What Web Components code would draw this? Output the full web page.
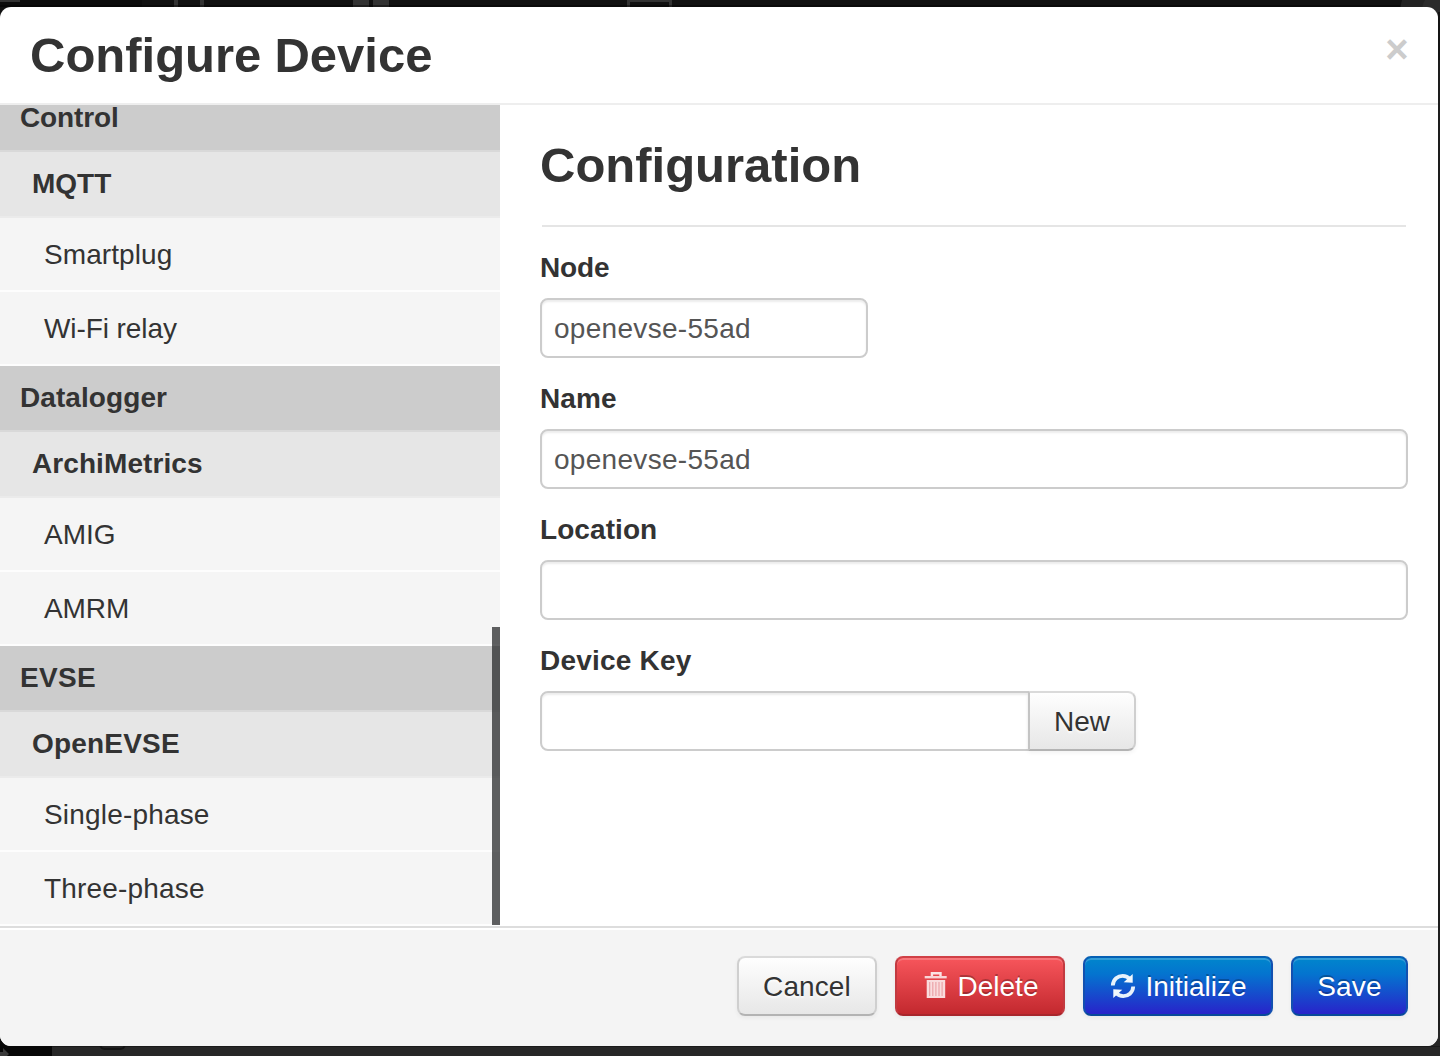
<!DOCTYPE html>
<html lang="en">
<head>
<meta charset="utf-8">
<title>Configure Device</title>
<style>
html, body { margin: 0; height: 100%; overflow: hidden; background: #111; }
body { font: 28px/40px "Liberation Sans", Arial, sans-serif; color: #333; }
</style>
</head>
<body>
<device-app></device-app>
<script>
const define = (name, html, init) => {
  const t = document.createElement('template');
  t.innerHTML = html;
  customElements.define(name, class extends HTMLElement {
    constructor() {
      super();
      this.attachShadow({ mode: 'open' }).append(t.content.cloneNode(true));
    }
    connectedCallback() {
      // optional per-label tracking, in px
      if (this.hasAttribute('track')) this.style.letterSpacing = this.getAttribute('track') + 'px';
      if (init) init(this, this.shadowRoot);
    }
  });
};

define('page-backdrop', `
<style>:host{display:block;position:absolute;inset:0;z-index:-1} svg{display:block}</style>
<svg width="1440" height="1056" viewBox="0 0 1440 1056">
  <rect width="1440" height="1056" fill="#111"/>
  <rect width="142" height="7" fill="#0c0c0c"/>
  <path fill="#333" d="M0 0h20v2H0zM174 0h4v7h-4zM200 0h4v7h-4zM353 0h16v7h-16zM373 0h16v7h-16z"/>
  <path fill="#333" d="M627 0h45v7h-3V2h-39v5h-3z"/>
  <rect y="5" width="1400" height="2" fill="#000" opacity=".4"/>
  <path fill="#222" d="M1402 0h38v60h-38q-4-48 0-60z"/>
  <path fill="#2b2b2b" d="M1425 0h15v16h-18q-1-10 3-16z"/>
  <rect x="1438" y="12" width="2" height="48" fill="#141414"/>
  <rect x="1438" y="60" width="2" height="996" fill="#1d1d1d"/>
  <rect y="1030" width="1440" height="26" fill="#272727"/>
  <rect y="1046" width="1440" height="1" fill="#1a1a1a"/>
  <rect y="1030" width="52" height="26" fill="#070707"/>
  <path d="M3 1048l6 6-2 2H0v-4h3z" fill="#3a3a3a"/>
  <rect x="100.500" y="1035" width="24" height="14" rx="4" fill="#222" stroke="#131313" stroke-width="2"/>
</svg>`);

define('modal-dialog', `
<style>
:host{display:flex;flex-direction:column;box-sizing:border-box;width:1438px;height:1039px;background:#fff;border-radius:11px;overflow:hidden}
header{display:flex;justify-content:space-between;align-items:flex-start;box-sizing:border-box;height:98px;padding:18px 30px 0;border-bottom:2px solid #eee;flex:none}
h3{margin:0;font-size:49px;line-height:60px;font-weight:bold;word-spacing:-.5px}
.close{font-size:40px;line-height:40px;font-weight:bold;color:#ccc;padding-top:4px;margin-right:-.5px}
main{display:flex;height:821px;flex:none}
footer{display:flex;justify-content:flex-end;gap:18px;box-sizing:border-box;flex:1;padding:28px 30px 30px;background:#f4f4f4;border-top:2px solid #ddd;box-shadow:inset 0 2px 0 #fff}
</style>
<header><h3><slot name="title"></slot></h3><span class="close">×</span></header>
<main><slot></slot></main>
<footer><slot name="actions"></slot></footer>`);

define('device-menu', `
<style>
:host{display:flex;position:relative;flex-direction:column;justify-content:flex-end;width:500px;height:821px;overflow:hidden;background:#fff;flex:none}
.thumb{position:absolute;right:0;top:522px;width:8px;height:298px;background:rgba(34,36,38,.72)}
</style>
<slot></slot><div class="thumb"></div>`);

define('menu-row', `
<style>
:host{display:block;box-sizing:border-box;flex:none;height:74px;line-height:74px;padding-left:44px;background:#f5f5f5;border-bottom:2px solid #fdfdfd}
:host([level="1"]){height:66px;line-height:64px;padding-left:20px;background:#ccc;border-color:#d9d9d9;font-weight:bold}
:host([level="2"]){height:66px;line-height:64px;padding-left:32px;background:#e6e6e6;border-color:#ebebeb;font-weight:bold}
:host([partial]){height:47px!important;line-height:26px!important}
</style>
<slot></slot>`);

define('config-form', `
<style>
:host{display:flex;flex-direction:column;flex:1;padding:30px 30px 0 40px}
h3{margin:0;font-size:49px;line-height:60px;font-weight:bold}
hr{margin:30px 2px 20px;border:0;height:2px;background:#e5e5e5}
</style>
<h3><slot name="title"></slot></h3><hr><slot></slot>`);

define('form-field', `
<style>
:host{display:block;height:131px}
label{display:block;height:40px;line-height:42px;font-weight:bold;margin-bottom:11px}
.row{display:flex;letter-spacing:0}
.box{box-sizing:border-box;height:60px;border:2px solid #ccc;border-radius:8px;padding:0 12px;line-height:57px;color:#555;background:#fff;box-shadow:inset 0 2px 2px rgba(0,0,0,.075);letter-spacing:.3px;flex:none}
:host([joined]) .box{border-radius:8px 0 0 8px}
</style>
<label></label><div class="row"><div class="box"></div><slot></slot></div>`, (el, root) => {
  root.querySelector('label').textContent = el.getAttribute('label');
  const b = root.querySelector('.box');
  b.textContent = el.getAttribute('value') || '';
  b.style.width = el.getAttribute('width') + 'px';
});

define('push-button', `
<style>
:host{display:flex;box-sizing:border-box;height:60px;align-items:center;justify-content:center;line-height:40px;border:2px solid #ccc;border-color:#dadada #cfcfcf #b3b3b3;border-radius:8px;padding-top:2px;
background:linear-gradient(#fff,#e6e6e6) border-box;color:#333;text-shadow:0 2px 2px rgba(255,255,255,.75);box-shadow:inset 0 2px 0 rgba(255,255,255,.2),0 2px 4px rgba(0,0,0,.05);flex:none;gap:8px}
:host([kind]){color:#fff;text-shadow:0 -2px 0 rgba(0,0,0,.25)}
:host([kind="danger"]){background:linear-gradient(#f9575d,#c1272d) border-box;border-color:#d04046 #c23a40 #a8262c}
:host([kind="primary"]){background:linear-gradient(#0088cc,#0474cf 30%,#2a1fca) border-box;border-color:#0560b4 #1250b0 #07499a}
:host([joined]){border-radius:0 8px 8px 0;border-left-color:#c4c4c4;margin-left:-2px}
::slotted(svg){display:block;flex:none;margin-bottom:2px}
</style>
<slot></slot>`, el => { el.style.width = el.getAttribute('width') + 'px'; });

define('device-app', `
<style>:host{display:block;position:relative;height:1056px;padding-top:7px;box-sizing:border-box;z-index:0}</style>
<page-backdrop></page-backdrop>
<modal-dialog>
  <span slot="title">Configure Device</span>
  <device-menu>
    <menu-row level="1" partial track="-.12">Control</menu-row>
    <menu-row level="2">MQTT</menu-row>
    <menu-row track=".08">Smartplug</menu-row>
    <menu-row track="-.08">Wi-Fi relay</menu-row>
    <menu-row level="1" track=".08">Datalogger</menu-row>
    <menu-row level="2" track=".08">ArchiMetrics</menu-row>
    <menu-row>AMIG</menu-row>
    <menu-row track="-.1">AMRM</menu-row>
    <menu-row level="1" track=".3">EVSE</menu-row>
    <menu-row level="2" track=".2">OpenEVSE</menu-row>
    <menu-row track=".18">Single-phase</menu-row>
    <menu-row track=".18">Three-phase</menu-row>
  </device-menu>
  <config-form>
    <span slot="title">Configuration</span>
    <form-field label="Node" value="openevse-55ad" width="328" track="-.15"></form-field>
    <form-field label="Name" value="openevse-55ad" width="868" track=".1"></form-field>
    <form-field label="Location" width="868" track=".08"></form-field>
    <form-field label="Device Key" width="490" track=".22" joined><push-button joined width="108" track="0">New</push-button></form-field>
  </config-form>
  <push-button slot="actions" width="140" track=".1">Cancel</push-button>
  <push-button slot="actions" kind="danger" width="170"><svg width="28" height="28" viewBox="0 0 28 28">
    <g transform="translate(-.8 0)">
    <path d="M10.700 4V1.200h8.600V4" fill="none" stroke="#fbe4e5" stroke-width="2.400"/>
    <path d="M3.500 4h22v2.400h-22z" fill="#f9d5d7"/>
    <path d="M5.500 8h18.500v18H5.500z" fill="#f9dcdd"/>
    <path d="M8.500 10v14M11.600 10v14M14.700 10v14M17.800 10v14M20.900 10v14" stroke="#eba3a7" stroke-width="1.200"/>
    </g>
  </svg>Delete</push-button>
  <push-button slot="actions" kind="primary" width="190"><svg width="28" height="28" viewBox="0 0 28 28">
    <g transform="translate(.5 0)">
    <g fill="none" stroke="#e8f2fb" stroke-width="3.800"><path d="M3.300 13.500C3.600 7 8.500 3.900 13.200 3.900c3 0 5.600 1.300 7.300 3.300"/><path d="M23.700 14.500c-.3 6.500-5.200 9.600-9.900 9.600-3 0-5.600-1.300-7.300-3.300"/></g>
    <path d="M23.200 2v8.800l-9-.6zM3.800 26v-8.800l9 .6z" fill="#f2f8fd"/>
    </g>
  </svg>Initialize</push-button>
  <push-button slot="actions" kind="primary" width="117" track=".2">Save</push-button>
</modal-dialog>`);
</script>
</body>
</html>
